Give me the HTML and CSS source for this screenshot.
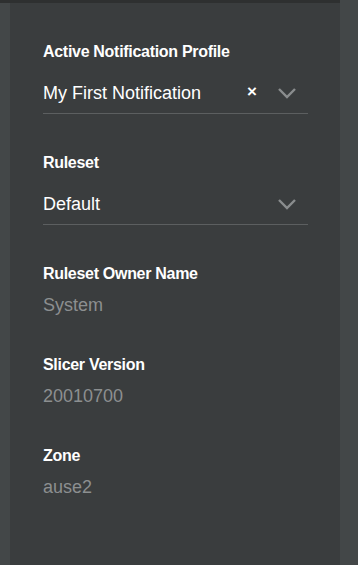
FILE: index.html
```html
<!DOCTYPE html>
<html lang="en">

<head>
    <meta charset="UTF-8">
    <meta name="viewport" content="width=device-width, initial-scale=1.0">
    <title>Notification Settings</title>
    <link rel="stylesheet" href="styles.css">
</head>

<body>
    <div class="top-bar"></div>
    <div class="layout">
        <div class="panel">
            <!-- Active profile select -->
            <div class="field">
                <div class="field-label">Active Notification Profile</div>
                <div class="select">
                    <span class="select-value">My First Notification</span>
                    <span class="select-clear">&times;</span>
                    <svg class="select-arrow" width="20" height="12" viewBox="0 0 20 12">
                        <path d="M2 2 L10 10 L18 2" fill="none" stroke="#8a8d8e" stroke-width="2.4" />
                    </svg>
                </div>
            </div>

            <div class="field">
                <div class="field-label">Ruleset</div>
                <div class="select">
                    <span class="select-value">Default</span>
                    <svg class="select-arrow" width="20" height="12" viewBox="0 0 20 12">
                        <path d="M2 2 L10 10 L18 2" fill="none" stroke="#8a8d8e" stroke-width="2.4" />
                    </svg>
                </div>
            </div>

            <!-- Read only info -->
            <div class="info">
                <div class="field-label">Ruleset Owner Name</div>
                <div class="info-value">System</div>
            </div>

            <div class="info">
                <div class="field-label">Slicer Version</div>
                <div class="info-value">20010700</div>
            </div>

            <div class="info">
                <div class="field-label">Zone</div>
                <div class="info-value">ause2</div>
            </div>
        </div>
    </div>
</body>

</html>
```

FILE: styles.css
```css
body {
    font-family: "Liberation Sans", Arial, sans-serif;
    margin: 0;
    padding: 0;
    background-color: #434748;
    color: #ffffff;
    height: 565px;
    overflow: hidden;
}

.top-bar {
    height: 3px;
    width: 340px;
    background-color: #2e3030;
}

.layout {
    display: flex;
    height: 562px;
}

.panel {
    margin-left: 10px;
    width: 330px;
    background-color: #3a3d3e;
    padding: 39px 32px 0 33px;
    box-sizing: border-box;
}

.field {
    margin-bottom: 39px;
}

.field-label {
    font-size: 16px;
    font-weight: bold;
    letter-spacing: -0.3px;
    line-height: 20px;
}

.select {
    display: flex;
    align-items: center;
    height: 40px;
    border-bottom: 1px solid #5c5f60;
    margin-top: 11px;
}

.select-value {
    flex: 1;
    font-size: 18px;
}

.select-clear {
    font-size: 17px;
    font-weight: bold;
    margin-right: 20px;
    margin-bottom: 2px;
}

.select-arrow {
    margin-right: 11px;
}

.info {
    margin-bottom: 39px;
}

.info-value {
    font-size: 18px;
    color: #8c8f90;
    margin-top: 11px;
}
```
